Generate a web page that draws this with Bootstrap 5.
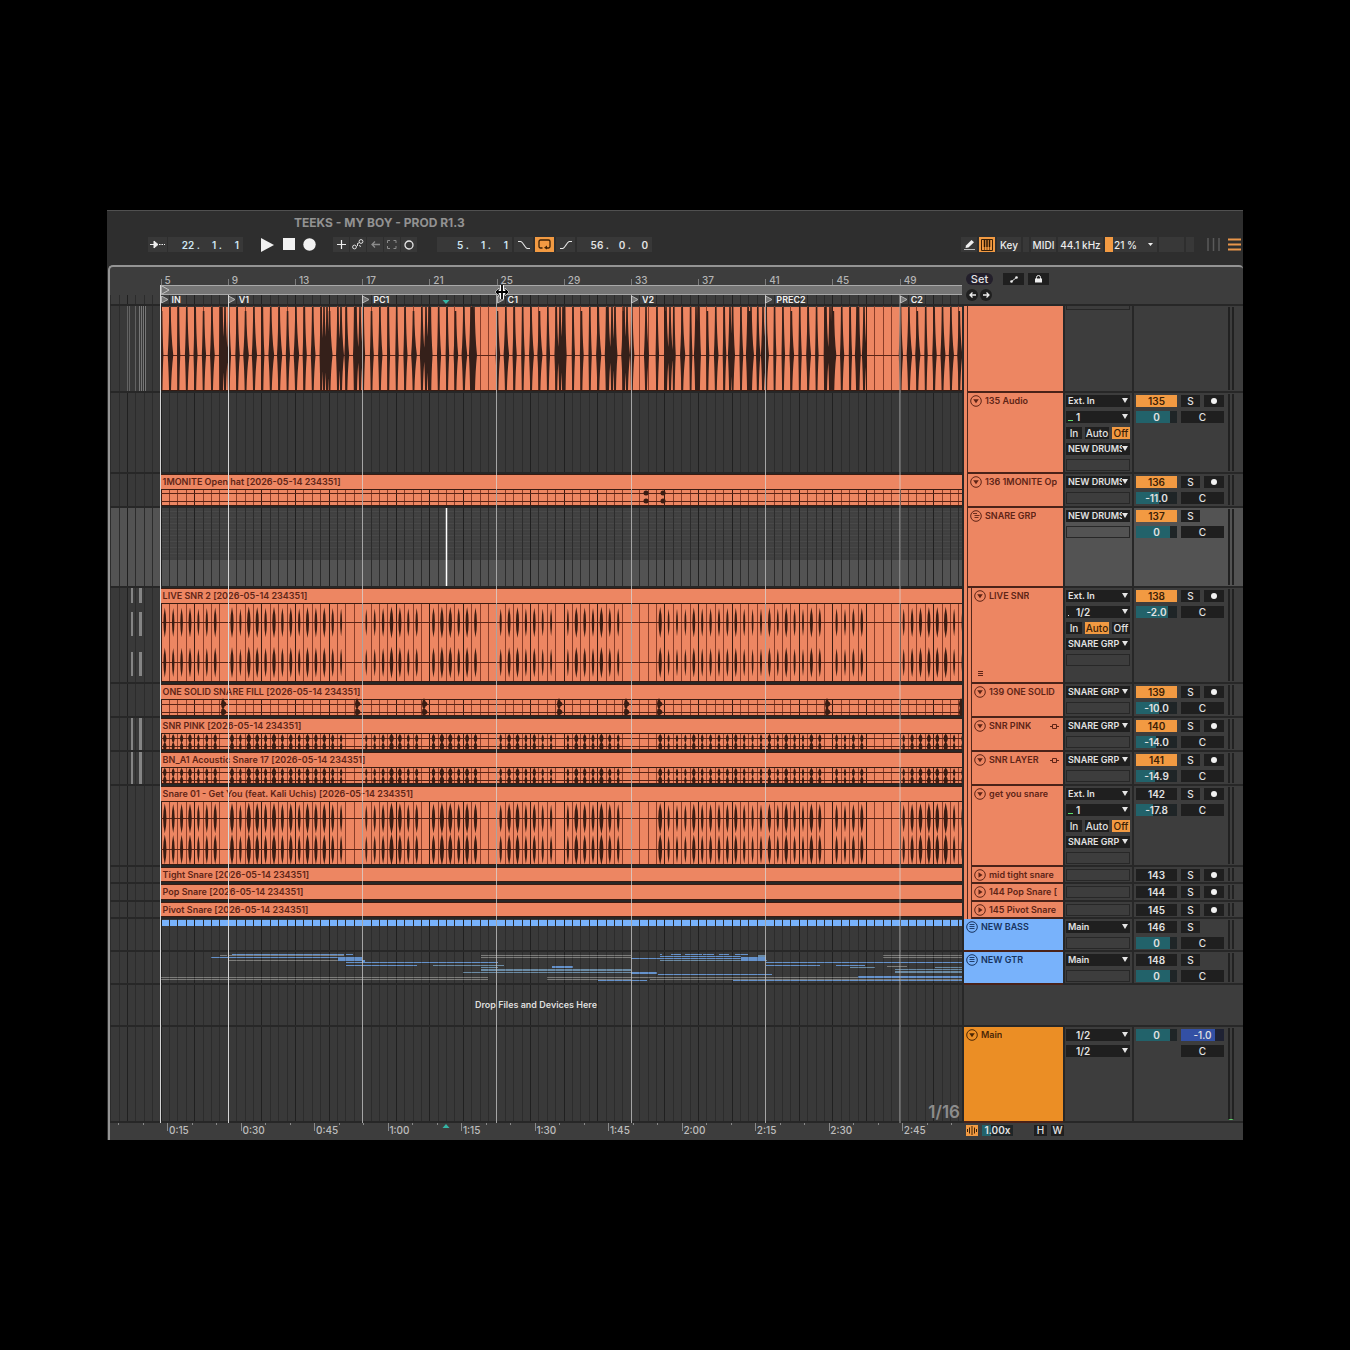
<!DOCTYPE html>
<html lang="en">
<head>
<meta charset="utf-8">
<meta name="viewport" content="width=device-width, initial-scale=1">
<title>TEEKS - MY BOY - PROD R1.3</title>
<link href="https://cdn.jsdelivr.net/npm/bootstrap@5.3.0/dist/css/bootstrap.min.css" rel="stylesheet">
<style>
:root { --clip:#ed8662; --ink:#5e2416; --panel:#3d3d3d; --edge:#272727; --box:#1f1f1f; --amber:#f29a42; --teal:#22626a; }
body { background:#000; font-family:Inter,"Liberation Sans",sans-serif; font-size:10px; font-weight:500; line-height:12px; color:#e2e2e2; }
.daw { margin:210px 107px; background:#2e2e2e; border-top:1px solid #505050; overflow:hidden; }
.daw-title { font-size:12px; font-weight:700; line-height:14px; color:#929292; padding:5px 0 0 187px; margin:0; }
.transport { height:35px; padding:7px 2px 0 41px; }
.daw button, .daw input, .daw select { border:0; border-radius:0; padding:0; margin:0; color:inherit; font:inherit; background:var(--box); }
.transport .tb { height:15px; background:#383838; color:#ececec; display:flex; align-items:center; justify-content:center; flex:none; }
.transport .tb.lit { background:var(--amber); }
.transport .bare { background:none; }
.w6{width:6px} .w8{width:8px} .w13{width:13px} .w16{width:16px} .w18{width:18px} .w19{width:19px} .w24{width:24px} .w25{width:25px} .w45{width:45px} .w52{width:52px}
.gap1 { gap:1px; } .gap2 { gap:2px; } .gap4 { gap:4px; } .gap8 { gap:8px; }
.posbox { width:75px; height:15px; background:#383838; display:flex; padding-right:4px; flex:none; font-weight:600; }
.posbox input { background:none; width:22px; min-width:0; text-align:right; flex:none; }
.posbox input:first-child { width:32px; }
.posbox input:last-child { width:17px; }
.posbox.cool input { color:#cfe6f2; }
.gapA { margin-left:18px; } .gapB { margin-left:17px; } .gapC { margin-left:20px; }
.arr { border:solid #949494; border-width:2px 0 0 2px; border-radius:5px 4px 0 0; background:var(--panel); margin-left:1px; position:relative; }
.side { flex:none; width:281px; }
.timeline { flex:1 1 0; min-width:0; position:relative; }
.head { height:39px; }
.ruler { height:18px; padding-left:5.94%; overflow:hidden; color:#b4b4b4; }
.ruler > span { flex:0 0 8.385%; padding:7px 0 0 4px; position:relative; }
.ruler > span::before { content:""; position:absolute; left:0; bottom:0; height:6px; width:1px; background:#7d7d7d; }
.loopstrip { height:10px; margin-left:5.94%; background:#757575; border:solid #a9a9a9; border-width:1px 0 1px 1px; position:relative; }
.pointer { left:42.6%; top:-1px; z-index:4; margin-left:-8px; }
.marks { height:11px; padding-left:5.94%; position:relative; overflow:hidden; border-bottom:2px solid var(--edge); color:#efefef; font-weight:600; font-size:9px; }
.marks > span { position:relative; flex:0 0 16.77%; display:flex; gap:3px; line-height:10px; white-space:nowrap; }
.marks > span:first-of-type { flex-basis:8.385%; }
.fill { position:absolute; left:0; top:0; width:100%; height:100%; }
.locs { width:calc(100% - 281px); top:18px; height:838px; z-index:3; pointer-events:none; }
.tools { padding:6px 0 0 4px; }
.setbtn { width:27px; height:12px; border-radius:6px !important; background:#231f2b !important; font-size:11px !important; margin-right:10px !important; }
.sq { width:21px; height:12px; display:flex; align-items:center; justify-content:center; }
.rnd { width:12px; height:12px; border-radius:50% !important; display:flex; align-items:center; justify-content:center; }
.cell { border-bottom:2px solid var(--edge); overflow:hidden; }
.lane { background:#393939; }
.divide { width:2px; flex:none; background:var(--edge); }
.names { width:99px; flex:none; }
.spine { width:4px; flex:none; background:var(--clip); border-right:1px solid #53281c; }
.tname { flex:1 1 0; min-width:0; background:var(--clip); color:var(--ink); padding:2px 0 0 2px; display:flex; gap:3px; white-space:nowrap; border-bottom-color:#4a2218; position:relative; font-size:9px; font-weight:600; }
.foldbtn { width:12px; height:12px; background:none !important; flex:none; display:flex; }
.lanesicon { left:6px; bottom:5px; }
.tname .lbl { overflow:hidden; }
.blue { background:#78b2fb; color:#17335e; }
.main { background:#eb8e25; color:#4a2705; }
.io { width:67px; flex:none; padding:2px 2px 0 1px; background:var(--panel); display:flex; flex-direction:column; gap:4px; }
.mix { flex:none; width:109px; padding:2px 0 0 2px; background:var(--panel); display:flex; }
.dropend { flex:none; width:279px; }
.sel .io, .sel .mix, .sel .lane { background:#535353; }
.picker { position:relative; height:12px; background:var(--box); display:flex; }
.picker::after { content:""; position:absolute; right:2px; top:3px; width:6px; height:5px; background:#e6e6e6; clip-path:polygon(0 0,100% 0,50% 100%); }
.daw .picker select { appearance:none; background:none; width:56px; padding-left:2px; overflow:hidden; text-overflow:clip; line-height:12px; height:12px; font-size:9px; font-weight:600; }
.daw .picker select.inset { padding-left:10px; font-size:10px; }
.picker i { position:absolute; left:2px; bottom:2px; width:5px; height:1px; background:#5fe06b; }
.picker i.dot { width:1px; background:#ddd; }
.blank { height:12px; border:1px solid #272727; flex:none; }
.blank.cut { height:4px; margin-top:-2px; border-top:0; }
.mon { height:12px; display:flex; gap:3px; }
.mon button { flex:none; }
.daw .on { background:var(--amber); color:#3b2005; }
.knobs { width:90px; display:grid; grid-template-columns:41px 19px 20px; column-gap:4px; row-gap:4px; grid-auto-rows:12px; justify-content:start; }
.knobs > * { width:100%; text-align:center; line-height:12px; height:12px; min-width:0; }
.daw .knobs > button:first-child, .daw .vol { font-weight:600; }
.knobs .pan { grid-column:2 / 4; }
.daw .vol { background:linear-gradient(90deg,var(--teal) var(--v),#1f2527 var(--v)); }
.daw .cue { background:linear-gradient(90deg,#3350a4 80%,#1f2233 80%); }
.rec { display:flex; align-items:center; justify-content:center; }
.rec span { width:6px; height:6px; border-radius:50%; background:#f2f2f2; }
.meter { width:6px; margin:-1px 0 1px 2px; border:solid #212121; border-width:0 2px; }
.meter.hot { border-bottom:1px solid #5fd068; }
.clipname { position:relative; padding:2px 0 0 calc(5.94% + 2px); color:var(--ink); white-space:nowrap; font-size:9px; font-weight:600; }
.drop { position:relative; padding-top:14px; text-align:center; color:#dedede; font-size:9px; font-weight:600; }
.quant { position:absolute; right:2px; bottom:1px; font-size:17px; line-height:16px; font-weight:600; color:#8c8c8c; }
.foot { height:17px; }
.times { padding-left:5.03%; overflow:hidden; color:#bdbdbd; }
.times > span { flex:0 0 9.245%; padding:1px 0 0 2px; position:relative; z-index:1; }
.footbtn { height:11px; line-height:11px !important; }
.zoomval { width:31px; margin-right:17px !important; }
svg { display:block; }
</style>
</head>
<body>
<main class="daw">
  <h1 class="daw-title">TEEKS - MY BOY - PROD R1.3</h1>
  <div class="transport d-flex align-items-start">
    <div class="d-flex gap1">
      <button class="tb w19" aria-label="Follow"><svg width="15" height="9" viewBox="0 0 15 9"><path d="M0 4.500h6M4 1v7l4-3.500z" fill="#eee" stroke="#eee"/><path d="M9 4.500h6" stroke="#eee" stroke-dasharray="1.500 1"/></svg></button>
      <div class="posbox cool"><input aria-label="Bar" value="22 ."><input aria-label="Beat" value="1 ."><input aria-label="Sixteenth" value="1"></div>
    </div>
    <div class="d-flex gapA gap8">
      <button class="tb bare w13" aria-label="Play"><svg width="13" height="14"><path d="M0 0l13 7-13 7z" fill="#f2f2f2"/></svg></button>
      <button class="tb bare w13" aria-label="Stop"><svg width="13" height="13"><path d="M1 0h12v12H1z" fill="#f2f2f2"/></svg></button>
      <button class="tb bare w13" aria-label="Record"><svg width="13" height="13"><circle cx="6.500" cy="6.500" r="6.200" fill="#f2f2f2"/></svg></button>
    </div>
    <div class="d-flex gapB gap1">
      <button class="tb w16" aria-label="Overdub"><svg width="9" height="9"><path d="M4.500 0v9M0 4.500h9" stroke="#eee" stroke-width="1.200"/></svg></button>
      <button class="tb w16" aria-label="Automation arm"><svg width="12" height="11" fill="none" stroke="#ddd"><circle cx="2.500" cy="8" r="1.900"/><circle cx="9" cy="2.500" r="1.900"/><path d="M4.500 7.500L6 6l-1-1 2.500-1.500M7 6.500l2 1"/></svg></button>
      <button class="tb w16" aria-label="Back to arrangement"><svg width="9" height="7" fill="none" stroke="#8b8b8b"><path d="M9 3.500H1M4 .5l-3 3 3 3" stroke-width="1.300"/></svg></button>
      <button class="tb w16" aria-label="Capture"><svg width="10" height="9" fill="none" stroke="#8b8b8b"><path d="M.5 3V.5H3M6.500.5H9V3M9 6v2.500H6.500M3 8.500H.5V6"/></svg></button>
      <button class="tb w16" aria-label="Session record"><svg width="10" height="10" fill="none" stroke="#e6e6e6" stroke-width="1.300"><circle cx="5" cy="5" r="4"/></svg></button>
    </div>
    <div class="d-flex gapC gap2">
      <div class="posbox cool"><input aria-label="Loop bar" value="5 ."><input aria-label="Loop beat" value="1 ."><input aria-label="Loop sixteenth" value="1"></div>
      <button class="tb w19" aria-label="Punch in"><svg width="12" height="8" fill="none" stroke="#e6e6e6"><path d="M0 .5h2.500C5 .5 7 7.500 9.500 7.500H12" stroke-width="1.200"/></svg></button>
      <button class="tb lit w19" aria-label="Loop"><svg width="13" height="11" fill="none" stroke="#3b2005" stroke-width="1.300"><path d="M4.500 9H2.500A1.500 1.500 0 0 1 1 7.500v-5A1.500 1.500 0 0 1 2.500 1h8A1.500 1.500 0 0 1 12 2.500v5A1.500 1.500 0 0 1 10.500 9H8"/><path d="M9 6.500v4L6 8.800z" fill="#3b2005" stroke="none"/></svg></button>
      <button class="tb w19" aria-label="Punch out"><svg width="12" height="8" fill="none" stroke="#e6e6e6"><path d="M0 7.500h2.500C5 7.500 7 .5 9.500.5H12" stroke-width="1.200"/></svg></button>
      <div class="posbox"><input aria-label="Length bars" value="56 ."><input aria-label="Length beats" value="0 ."><input aria-label="Length sixteenths" value="0"></div>
    </div>
    <div class="d-flex gap2 ms-auto">
      <button class="tb w16" aria-label="Draw mode"><svg width="11" height="11"><path d="M2 6.500L7.500 1 10 3.200 4.500 8.500 1.500 9z" fill="#f0f0f0"/><path d="M0 10.500h11" stroke="#bbb"/></svg></button>
      <button class="tb lit w16" aria-label="Computer keyboard"><svg width="12" height="12"><path d="M.5.5h11v11H.5z" fill="none" stroke="#3b2005"/><path d="M3.500 1v7M6 1v7M8.500 1v7" stroke="#2a1603" stroke-width="1.500"/><path d="M3.500 8v3M6 8v3M8.500 8v3" stroke="#3b2005" stroke-width=".6"/></svg></button>
      <button class="tb w24">Key</button>
      <span class="tb w6"></span>
      <button class="tb w25">MIDI</button>
      <button class="tb w45">44.1 kHz</button>
      <button class="tb w52 justify-content-start gap1"><span class="h-100 w8 on"></span>21 %<svg class="ms-auto me-1" width="5" height="3"><path d="M0 0h5L2.500 3z" fill="#eee"/></svg></button>
      <span class="tb w25"></span><span class="tb w8"></span>
      <button class="tb bare w18 ms-2" aria-label="Browser"><svg width="13" height="13"><path d="M1 0v13M6.500 0v13M12 0v13" stroke="#5a5a5a" stroke-width="1.500"/></svg></button>
      <button class="tb bare w13 ms-1" aria-label="Overview"><svg width="13" height="13"><path d="M0 1.500h13M0 6.500h13M0 11.500h13" stroke="#e9964a" stroke-width="1.800"/></svg></button>
    </div>
  </div>

  <section class="arr">
    <svg class="locs position-absolute start-0" viewBox="0 0 852 838" preserveAspectRatio="none" aria-hidden="true"><path d="M50.500 0v838M118.500 10v828" stroke="#d6d6d6"/><path d="M252.500 10v828M386.500 10v828M521.500 10v828M655.500 10v828M790 10v828" stroke="#d8d8d8" stroke-opacity=".72"/><path d="M336.500 223v78" stroke="#fff" stroke-width="1.500"/></svg>
    <div class="head d-flex">
      <div class="timeline">
        <div class="ruler d-flex" id="ruler"></div>
        <div class="loopstrip"><svg width="8" height="8"><path d="M0 0l7 4-7 4" fill="none" stroke="#c4c4c4"/></svg>
          <svg class="position-absolute pointer" width="14" height="14" viewBox="0 0 14 14"><path d="M7 0v14M2 7h10" stroke="#fff" stroke-width="4"/><path d="M0 7l4-4v8zM14 7l-4-4v8z" fill="#000" stroke="#fff" stroke-width=".6"/><path d="M7 0v14M2 7h10" stroke="#000" stroke-width="1.800"/></svg>
        </div>
        <div class="marks d-flex" id="marks"></div>
      </div>
      <div class="side d-flex flex-column cell tools">
        <div class="d-flex"><button class="setbtn">Set</button><button class="sq" aria-label="Automation"><svg width="8" height="7"><path d="M1.500 5.500l5-4" stroke="#ddd"/><circle cx="1.500" cy="5.500" r="1.300" fill="#eee"/><circle cx="6.500" cy="1.500" r="1.300" fill="#eee"/></svg></button><button class="sq ms-1" aria-label="Lock envelopes"><svg width="7" height="8"><path d="M1.500 4V2.500a2 2 0 0 1 4 0V4" fill="none" stroke="#eee"/><path d="M0 3.500h7V7.500H0z" fill="#eee"/></svg></button></div>
        <div class="d-flex gap2 mt-1"><button class="rnd" aria-label="Previous locator"><svg width="7" height="6"><path d="M7 3H1M3.500.5L1 3l2.500 2.500" fill="none" stroke="#eee" stroke-width="1.300"/></svg></button><button class="rnd" aria-label="Next locator"><svg width="7" height="6"><path d="M0 3h6M3.500.5L6 3 3.500 5.500" fill="none" stroke="#eee" stroke-width="1.300"/></svg></button></div>
      </div>
    </div>
    <div id="tracks"></div>
    <div class="foot d-flex">
      <div class="timeline times d-flex" id="times"></div>
      <div class="side d-flex align-items-end gap4 px-1 pb-1">
        <button class="footbtn on" aria-label="Waveform zoom"><svg width="12" height="11"><path d="M1.500 4v3M3.500 2.500v6M6 1v9M8.500 2.500v6M10.500 4v3" stroke="#3b2005"/></svg></button>
        <input class="footbtn vol text-center zoomval" style="--v:30%" aria-label="Zoom" value="1.00x">
        <button class="footbtn w13">H</button><button class="footbtn w13">W</button>
      </div>
    </div>
  </section>
</main>

<script src="https://cdn.jsdelivr.net/npm/bootstrap@5.3.0/dist/js/bootstrap.bundle.min.js"></script>
<script>
const X0 = 50.6, STEP = 8.397, W = 852, DARK = '#3a1c12';
const SUF = ' [2026-05-14 234351]';
const range = (a, b) => Array.from({ length: b - a + 1 }, (_, i) => a + i);
// half-bar slots in which the snare plays
const HITS = [[0,6],[8,21],[24,30],[32,37],[40,46],[48,54],[59,78],[80,83],[88,95]].flatMap(r => range(...r));
const noise = k => { const s = Math.sin(k * 12.9898) * 43758.5453; return s - Math.floor(s); };
const rect = (x, y, w, h, c) => `<rect x="${x}" y="${y}" width="${w}" height="${h}" fill="${c}"/>`;
const spindle = (x, y, w, h) => `M${x} ${y - h}Q${x + w} ${y} ${x} ${y + h}Q${x - w} ${y} ${x} ${y - h}`;
// a narrow full-height stroke that swells only near the centre line
const flare = (x, y, w, h) => `M${x - .8} ${y - h}L${x + .8} ${y - h}Q${x + 1} ${y - h * .4} ${x + w} ${y}Q${x + 1} ${y + h * .4} ${x + .8} ${y + h}L${x - .8} ${y + h}Q${x - 1} ${y + h * .4} ${x - w * .7} ${y}Q${x - 1} ${y - h * .4} ${x - .8} ${y - h}`;

function grid(h, y = 0, clip = false, from = -6) {
  let a = '', b = '';
  for (let k = from; k < 96; k++) {
    const x = Math.round(X0 + k * STEP) + .5, p = `M${x} ${y}V${h}`;
    if (k % 4 === 0) b += p; else a += p;
  }
  return clip ? `<path d="${a}" stroke="#8a3d28" stroke-width="1"/><path d="${b}" stroke="#3b1a10"/>`
              : `<path d="${a}" stroke="#2c2c2c"/><path d="${b}" stroke="#202020"/>`;
}
const ghost = (y, h) => rect(21, y, 2, h, '#858585') + rect(29, y, 3, h, '#858585');

function clipBase(h) {
  return rect(51, 0, 801, h, DARK) + rect(51, 1, 801, h - 2, 'var(--clip)');
}
function waves(h, centers, half, wide, slots) {
  let s = rect(51, 15, 801, 1, DARK) + grid(h - 1, 16, true, 0), d = '';
  for (const c of centers) {
    s += rect(51, c, 801, 1, '#5a2416');
    for (const k of slots) {
      const n = noise(k + 3);
      d += spindle((X0 + k * STEP + 4.2).toFixed(1) * 1, c + .5, wide * (.6 + n * .6), half * (.85 + n * .15));
    }
  }
  return s + `<path d="${d}" fill="${DARK}"/>`;
}
const art = {
  top(h) {
    let s = grid(h) + rect(51, 1, 801, h - 2, 'var(--clip)') + grid(h, 0, true, 0), d = '';
    for (let k = 0; k < 96; k++) {
      if ([38,39,57,58,84,85,86,87].includes(k)) continue;
      d += flare(X0 + k * STEP + 1, 49, 1.8 + noise(k) * 1.6, k % 5 ? 48 : 44);
    }
    for (const c of [112,115,214,217,231,246,250,316,319,361,364,450,453,498,502,514,517,536,556,560,586,588,620,638,641,653,656,716,720,722,747,754])
      d += flare(c, 49, 3, 48);
    for (const x of [17,19,25,29,31,33,35]) s += rect(x, 0, 1, h, x > 26 ? '#777' : '#626262');
    return s + rect(51, 49, 801, 1, '#5a2416') + `<path d="${d}" fill="#35201a"/>` + rect(51, h - 1, 801, 1, DARK);
  },
  empty: h => grid(h),
  hat: h => grid(h) + clipBase(h) + waves(h, [19, 27], 0, 0, []) + `<path d="M536 19h.1M536 27h.1M553 19h.1M553 27h.1" stroke="${DARK}" stroke-width="5" stroke-linecap="round"/>`,
  group(h) {
    let s = rect(51, 0, 801, 52, '#404040');
    for (let y = 3; y < 50; y += 3) s += rect(51, y, 801, 1, y % 2 ? '#494949' : '#434343');
    return s + grid(h);
  },
  live: h => grid(h) + ghost(0, 15) + ghost(24, 24) + ghost(64, 24) + clipBase(h) + waves(h, [34, 74], 16, 3, HITS),
  fill(h) {
    let d = '';
    for (const x of [113,247,314,449,516,549,717,851]) d += spindle(x, 20, 4, 6) + spindle(x, 28, 4, 6) + spindle(x + 1, 20, 5, 3) + spindle(x + 1, 28, 5, 3);
    return grid(h) + clipBase(h) + waves(h, [20, 28], 0, 0, []) + `<path d="${d}" fill="${DARK}"/>`;
  },
  pair: h => grid(h) + ghost(0, 32) + clipBase(h) + waves(h, [20, 28], 5, 3.8, HITS),
  tall: h => grid(h) + clipBase(h) + waves(h, [32, 63], 16, 3.6, HITS),
  solid: h => grid(h) + clipBase(h),
  bass(h) { return rect(51, 1, 801, 6, '#78b2fb') + grid(h); },
  notes(h) {
    const B = '#6592cc', G = '#7d7d7b', T = '#6b8ba5';
    const n = [[211,230,5,1,B],[220,227,3,1,G],[232,344,2,1,B],[228,344,5,1,B],[228,338,8,1,G],[228,344,3,1,G],[338,362,5,4,B],[346,353,2,1,B],[346,498,10,1,B],[346,417,13,1,B],[433,504,13,1,T],
      [362,365,8,3,B],[463,631,20,1,T],[481,631,3,1,G],[481,631,5,1,G],[481,631,17,2,T],[481,498,15,1,T],[161,488,25,1,G],[161,488,27,1,G],[552,573,14,2,B],[547,631,25,1,G],[547,631,27,1,G],[598,647,28,1,B],
      [631,763,6,1,B],[631,657,20,2,B],[658,772,22,1,B],[660,767,8,1,T],[660,662,2,1,B],[671,681,2,1,B],[685,702,2,1,B],[703,714,2,1,B],[719,729,2,1,B],[735,748,2,1,B],[660,741,4,1,B],[741,766,5,4,B],[758,766,3,2,T],
      [766,962,10,1,B],[766,820,13,1,B],[836,865,13,1,B],[850,875,15,1,T],[883,962,3,1,G],[883,962,5,1,G],[895,962,17,1,T],[895,962,19,2,T],[887,907,14,1,G],[935,962,15,1,T],[631,962,25,1,G],[650,962,27,1,G],[733,962,28,1,B],[858,962,24,2,B]];
    return grid(h) + n.map(([a, b, y, t, c]) => rect(a - 110, y, b - a, t, c)).join('') + `<g opacity=".3">${grid(h)}</g>`;
  }
};

const T = [
  { h: 87, art: 'top', ind: 1, io: ['half'] },
  { h: 81, art: 'empty', ind: 1, name: '135 Audio', num: 135, on: 1, v: 0, rec: 1, io: ['Ext. In', '_1', 'mon:Off', 'NEW DRUMS', ''] },
  { h: 34, art: 'hat', clip: '1MONITE Open hat', ind: 1, name: '136 1MONITE Op', num: 136, on: 1, v: -11, rec: 1, io: ['NEW DRUMS', ''] },
  { h: 80, art: 'group', sel: 1, ind: 1, icon: 'grp', name: 'SNARE GRP', num: 137, on: 1, v: 0, io: ['NEW DRUMS', ''] },
  { h: 96, art: 'live', clip: 'LIVE SNR 2', ind: 2, name: 'LIVE SNR', lanes: 1, num: 138, on: 1, v: -2, rec: 1, io: ['Ext. In', '.1/2', 'mon:Auto', 'SNARE GRP', ''] },
  { h: 34, art: 'fill', clip: 'ONE SOLID SNARE FILL', ind: 2, name: '139 ONE SOLID', num: 139, on: 1, v: -10, rec: 1, io: ['SNARE GRP', ''] },
  { h: 34, art: 'pair', clip: 'SNR PINK', ind: 2, name: 'SNR PINK', link: 1, num: 140, on: 1, v: -14, rec: 1, io: ['SNARE GRP', ''] },
  { h: 34, art: 'pair', clip: 'BN_A1 Acoustic Snare 17', ind: 2, name: 'SNR LAYER', link: 1, num: 141, on: 1, v: -14.9, rec: 1, io: ['SNARE GRP', ''] },
  { h: 81, art: 'tall', clip: 'Snare 01 - Get You (feat. Kali Uchis)', ind: 2, name: 'get you snare', num: 142, v: -17.8, rec: 1, io: ['Ext. In', '_1', 'mon:Off', 'SNARE GRP', ''] },
  { h: 17, art: 'solid', clip: 'Tight Snare', ind: 2, icon: 'right', name: 'mid tight snare', num: 143, rec: 1, io: [''] },
  { h: 18, art: 'solid', clip: 'Pop Snare', ind: 2, icon: 'right', name: '144 Pop Snare [', num: 144, rec: 1, io: [''] },
  { h: 17, art: 'solid', clip: 'Pivot Snare', ind: 2, icon: 'right', name: '145 Pivot Snare', num: 145, rec: 1, io: [''] },
  { h: 33, art: 'bass', ind: 0, cls: 'blue', icon: 'list', name: 'NEW BASS', num: 146, v: 0, io: ['Main', ''] },
  { h: 33, art: 'notes', ind: 0, cls: 'blue', icon: 'list', name: 'NEW GTR', num: 148, v: 0, io: ['Main', ''] },
  { h: 42, art: 'empty', drop: 1 },
  { h: 96, art: 'empty', ind: 0, cls: 'main', name: 'Main', master: 1, v: 0, io: [' 1/2', ' 1/2'] }
];
const glyph = {
  down: '<path d="M3.200 4.300h5.600L6 8.300z" fill="currentColor"/>',
  right: '<path d="M4.500 3.200L8.500 6l-4 2.800z" fill="currentColor"/>',
  grp: '<path d="M3 3.500h4M4.500 5.500h5M4.500 7.500h4" stroke="currentColor" stroke-width=".9"/>',
  list: '<path d="M3.500 3.500h5M3.500 5.500h5M3.500 7.500h5" stroke="currentColor" stroke-width=".9"/>'
};
const fold = (i = 'down') => `<button class="foldbtn" aria-label="Fold"><svg width="12" height="12"><circle cx="6" cy="6" r="5.300" fill="none" stroke="currentColor"/>${glyph[i]}</svg></button>`;

function ioCell(v) {
  if (v === 'half') return '<div class="blank cut"></div>';
  if (v === '') return '<div class="blank"></div>';
  if (v.startsWith('mon:')) return '<div class="mon">' + [['In', 16], ['Auto', 24], ['Off', 18]].map(([t, w]) => `<button class="${v.endsWith(t) ? 'on' : ''}" style="width:${w}px">${t}</button>`).join('') + '</div>';
  const inset = '_. '.includes(v[0]);
  const mark = v[0] === '_' ? '<i></i>' : v[0] === '.' ? '<i class="dot"></i>' : '';
  return `<div class="picker"><select aria-label="Routing" class="${inset ? 'inset' : ''}"><option>${inset ? v.slice(1) : v}</option></select>${mark}</div>`;
}
function mixCell(t) {
  if (!t.num && !t.master) return '<div class="knobs"></div>';
  const txt = t.v ? t.v.toFixed(1) : '0';
  const pct = { '0': 84, '-2.0': 79, '-10.0': 57, '-11.0': 56, '-14.0': 48, '-14.9': 46, '-17.8': 42 }[txt];
  const vol = `<input class="vol" style="--v:${pct}%" aria-label="Volume" value="${txt}">`, pan = '<input class="pan" aria-label="Pan" value="C">';
  if (t.master) return `<div class="knobs">${vol}<input class="pan cue" aria-label="Cue volume" value="-1.0">${pan}</div>`;
  return `<div class="knobs"><button class="${t.on ? 'on' : ''}">${t.num}</button><button>S</button>${t.rec ? '<button class="rec" aria-label="Arm"><span></span></button>' : '<span></span>'}${t.v === undefined ? '' : vol + pan}</div>`;
}
document.getElementById('tracks').innerHTML = T.map(t => {
  const lane = `<div class="timeline lane cell"><svg class="fill" viewBox="0 0 ${W} ${t.h - 2}" preserveAspectRatio="none" aria-hidden="true">${art[t.art](t.h - 2)}</svg>${t.clip ? `<div class="clipname">${t.clip + SUF}</div>` : ''}${t.drop ? '<div class="drop">Drop Files and Devices Here</div>' : ''}${t.master ? '<div class="quant">1/16</div>' : ''}</div><div class="divide"></div>`;
  if (t.drop) return `<div class="d-flex" style="height:${t.h}px">${lane}<div class="cell dropend"></div></div>`;
  const name = `<div class="tname cell ${t.cls || ''}">${t.name ? fold(t.icon) + `<span class="lbl">${t.name}</span>` : ''}${t.link ? '<svg class="ms-auto me-1 mt-1" width="9" height="6"><path d="M0 2.500h2M7 2.500h2M2.500.5h4v4h-4z" fill="none" stroke="currentColor"/></svg>' : ''}${t.lanes ? '<svg class="position-absolute lanesicon" width="5" height="7"><path d="M0 1.500h5M0 3.500h5M0 5.500h5" stroke="currentColor"/></svg>' : ''}</div>`;
  return `<div class="d-flex ${t.sel ? 'sel' : ''}" style="height:${t.h}px">${lane}<div class="names d-flex">${'<div class="spine"></div>'.repeat(t.ind)}${name}</div><div class="divide"></div><div class="io cell">${t.io.map(ioCell).join('')}</div><div class="divide"></div><div class="mix cell">${mixCell(t)}<div class="meter ${t.master ? 'hot' : ''}"></div></div></div>`;
}).join('');

document.getElementById('ruler').innerHTML = range(0, 11).map(i => `<span>${5 + i * 4}</span>`).join('');
document.getElementById('marks').innerHTML = `<svg class="fill" viewBox="0 0 ${W} 9" preserveAspectRatio="none">${grid(9)}<path d="M332.500 5h7L336 9z" fill="#35b5a5"/></svg>` +
  ['IN', 'V1', 'PC1', 'C1', 'V2', 'PREC2', 'C2'].map(m => `<span><svg width="8" height="9"><path d="M.5 1l6.500 3.500L.5 8z" fill="#777" stroke="#b5b5b5"/></svg>${m}</span>`).join('');
const ticks = range(-2, 32).map(i => `M${Math.round(57 + i * 24.5) + .5} 0v${i % 3 ? 2 : 8}`).join('');
document.getElementById('times').innerHTML = `<svg class="fill" viewBox="0 0 ${W} 17" preserveAspectRatio="none"><path d="${ticks}" stroke="#8a8a8a"/><path d="M332.500 5h7L336 1z" fill="#35b5a5"/></svg>` +
  ['0:15', '0:30', '0:45', '1:00', '1:15', '1:30', '1:45', '2:00', '2:15', '2:30', '2:45'].map(s => `<span>${s}</span>`).join('');
</script>
</body>
</html>
